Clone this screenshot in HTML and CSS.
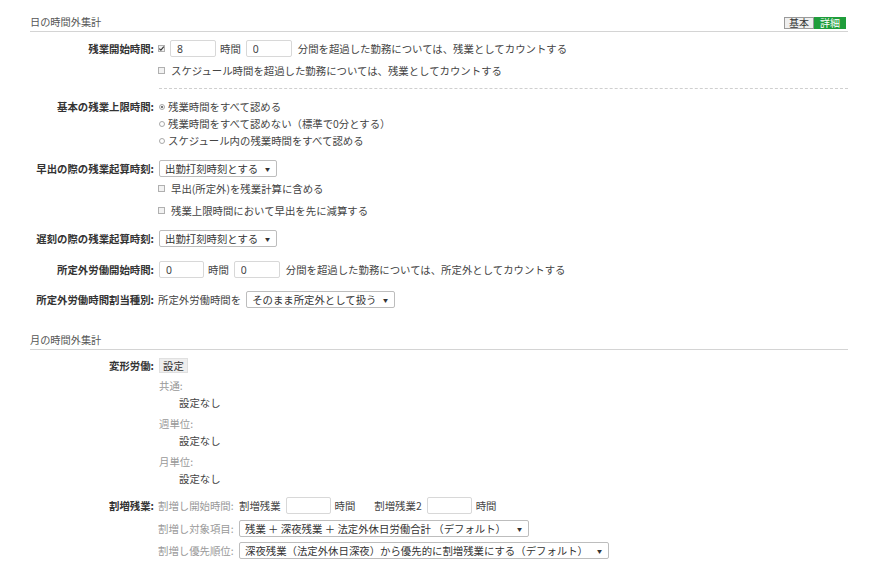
FILE: index.html
```html
<!DOCTYPE html>
<html lang="ja">
<head>
<meta charset="utf-8">
<title>時間外集計</title>
<link rel="stylesheet" href="styles.css">
</head>
<body>
<div class="page">
  <section class="sec">
    <div class="sec-head">
      <span class="sec-title">日の時間外集計</span>
      <span class="mode"><span class="mode-basic">基本</span><span class="mode-detail">詳細</span></span>
    </div>

    <div class="row r-start">
      <div class="label">残業開始時間:</div>
      <div class="content">
        <div class="line">
          <span class="cb checked"><svg viewBox="0 0 7 7" width="7" height="7"><path d="M1.3 3.6 L2.9 5.1 L5.8 1.6" fill="none" stroke="#333" stroke-width="1.1"/></svg></span>
          <input class="num n1" type="text" value="8">
          <span class="unit">時間</span>
          <input class="num n2" type="text" value="0">
          <span class="after">分間を超過した勤務については、残業としてカウントする</span>
        </div>
        <div class="line l-gap5">
          <span class="cb"></span>
          <span class="cb-text">スケジュール時間を超過した勤務については、残業としてカウントする</span>
        </div>
      </div>
    </div>

    <div class="dash"></div>

    <div class="row r-limit">
      <div class="label">基本の残業上限時間:</div>
      <div class="content">
        <div class="line"><span class="radio checked"></span><span class="radio-text">残業時間をすべて認める</span></div>
        <div class="line"><span class="radio"></span><span class="radio-text">残業時間をすべて認めない（標準で0分とする）</span></div>
        <div class="line"><span class="radio"></span><span class="radio-text">スケジュール内の残業時間をすべて認める</span></div>
      </div>
    </div>

    <div class="row r-early">
      <div class="label">早出の際の残業起算時刻:</div>
      <div class="content">
        <div class="line"><span class="select s-118"><span>出勤打刻時刻とする</span><span class="arrow">▼</span></span></div>
        <div class="line l-gap3"><span class="cb"></span><span class="cb-text">早出(所定外)を残業計算に含める</span></div>
        <div class="line l-gap5"><span class="cb"></span><span class="cb-text">残業上限時間において早出を先に減算する</span></div>
      </div>
    </div>

    <div class="row r-late">
      <div class="label">遅刻の際の残業起算時刻:</div>
      <div class="content">
        <div class="line"><span class="select s-118"><span>出勤打刻時刻とする</span><span class="arrow">▼</span></span></div>
      </div>
    </div>

    <div class="row r-extra">
      <div class="label">所定外労働開始時間:</div>
      <div class="content">
        <div class="line">
          <input class="num n3" type="text" value="0">
          <span class="unit">時間</span>
          <input class="num n2" type="text" value="0">
          <span class="after">分間を超過した勤務については、所定外としてカウントする</span>
        </div>
      </div>
    </div>

    <div class="row r-assign">
      <div class="label">所定外労働時間割当種別:</div>
      <div class="content">
        <div class="line">
          <span class="pre">所定外労働時間を</span>
          <span class="select s-149"><span>そのまま所定外として扱う</span><span class="arrow">▼</span></span>
        </div>
      </div>
    </div>
  </section>

  <section class="sec sec2">
    <div class="sec-head">
      <span class="sec-title">月の時間外集計</span>
    </div>

    <div class="row r-henkei">
      <div class="label">変形労働:</div>
      <div class="content">
        <div class="line"><span class="btn">設定</span></div>
        <div class="sub l-gap3">
          <div class="line sub-label">共通:</div>
          <div class="line sub-value">設定なし</div>
        </div>
        <div class="sub l-gap4">
          <div class="line sub-label">週単位:</div>
          <div class="line sub-value">設定なし</div>
        </div>
        <div class="sub l-gap4">
          <div class="line sub-label">月単位:</div>
          <div class="line sub-value">設定なし</div>
        </div>
      </div>
    </div>

    <div class="row r-premium">
      <div class="label">割増残業:</div>
      <div class="content">
        <div class="line">
          <span class="plabel">割増し開始時間:</span>
          <span class="ptext">割増残業</span>
          <input class="num n4" type="text" value="">
          <span class="unit">時間</span>
          <span class="ptext p2">割増残業2</span>
          <input class="num n4" type="text" value="">
          <span class="unit">時間</span>
        </div>
        <div class="line l-gap6">
          <span class="plabel">割増し対象項目:</span>
          <span class="select s-290"><span>残業 ＋ 深夜残業 ＋ 法定外休日労働合計 （デフォルト）</span><span class="arrow">▼</span></span>
        </div>
        <div class="line l-gap5">
          <span class="plabel">割増し優先順位:</span>
          <span class="select s-370"><span>深夜残業（法定外休日深夜）から優先的に割増残業にする（デフォルト）</span><span class="arrow">▼</span></span>
        </div>
      </div>
    </div>
  </section>
</div>
</body>
</html>
```

FILE: styles.css
```css
* { box-sizing: border-box; }

html, body {
  margin: 0;
  padding: 0;
  background: #ffffff;
}

body {
  font-family: "Noto Sans CJK JP", "Noto Sans", sans-serif;
  font-size: 10.4px;
  color: #444;
  line-height: 17px;
}

.page {
  padding: 13px 25px 0 30px;
}

.sec-head {
  display: flex;
  justify-content: space-between;
  align-items: center;
  height: 19px;
  border-bottom: 1px solid #d4d4d4;
  padding-bottom: 1px;
}

.sec-title {
  color: #555;
  font-size: 10.2px;
}

.mode {
  display: inline-flex;
  height: 12px;
  margin-top: 2px;
  margin-right: 2px;
  font-size: 10px;
  line-height: 10px;
}

.mode-basic {
  display: inline-flex;
  align-items: center;
  padding: 0 4px;
  background: #efefef;
  border: 1px solid #9a9a9a;
  color: #333;
}

.mode-detail {
  display: inline-flex;
  align-items: center;
  padding: 0 5px;
  background: #1f9d3b;
  border: 1px solid #1f9d3b;
  color: #ffffff;
}

.row {
  display: grid;
  grid-template-columns: 124px 1fr;
  column-gap: 4px;
}

.label {
  text-align: right;
  font-weight: bold;
  color: #333;
  height: 17px;
  line-height: 17px;
}

.content {
  display: flex;
  flex-direction: column;
}

.line {
  display: flex;
  align-items: center;
  height: 17px;
  white-space: nowrap;
}

.l-gap3 { margin-top: 3px; }
.l-gap4 { margin-top: 4px; }
.l-gap5 { margin-top: 5px; }
.l-gap6 { margin-top: 6px; }

.r-start { margin-top: 8px; }
.r-limit { margin-top: 9px; }
.r-early { margin-top: 11px; }
.r-late { margin-top: 11px; }
.r-extra { margin-top: 14px; }
.r-assign { margin-top: 13px; }
.sec2 { margin-top: 23px; }
.r-henkei { margin-top: 7px; }
.r-premium { margin-top: 10px; }

.dash {
  margin-top: 9px;
  margin-left: 129px;
  border-top: 1px dashed #cfcfcf;
  height: 0;
}

.cb {
  display: inline-flex;
  width: 7px;
  height: 7px;
  border: 1px solid #b0b0b0;
  background: #f2f2f2;
  margin-left: 0;
  flex: none;
}

.cb.checked {
  border: none;
  background: #f2f2f2;
  outline: 1px solid #b0b0b0;
  outline-offset: -1px;
}

.cb.checked svg {
  display: block;
}

.cb-text {
  margin-left: 6px;
}

.radio {
  display: inline-block;
  width: 6px;
  height: 6px;
  border: 1px solid #a8a8a8;
  border-radius: 50%;
  background: #fff;
  margin-left: 1px;
  position: relative;
  flex: none;
}

.radio.checked {
  background: radial-gradient(circle, #777 0 1.3px, #fff 1.6px);
}

.radio-text {
  margin-left: 3px;
}

.num {
  height: 17px;
  width: 46px;
  border: 1px solid #d8d8d8;
  border-radius: 2px;
  padding: 0 0 0 6px;
  font-family: "Noto Sans", sans-serif;
  font-size: 10.4px;
  color: #444;
  background: #fff;
  outline: none;
}

.n1 { margin-left: 5px; }
.n2 { margin-left: 5px; width: 46px; }
.n3 { margin-left: 1px; width: 45px; }
.n4 { width: 45px; margin-left: 5px; }

.unit {
  margin-left: 4px;
}

.after {
  margin-left: 6px;
}

.select {
  display: inline-flex;
  align-items: center;
  justify-content: space-between;
  height: 17px;
  border: 1px solid #bdbdbd;
  border-radius: 2px;
  padding: 0 6px 0 5px;
  background: #fff;
  color: #333;
  margin-left: 1px;
}

.arrow {
  font-size: 5px;
  line-height: 5px;
  color: #333;
}

.s-118 { width: 118px; }
.s-149 { width: 149px; }
.s-290 { width: 290px; }
.s-370 { width: 370px; }

.pre + .select { margin-left: 5px; }

.btn {
  display: inline-flex;
  align-items: center;
  height: 15px;
  padding: 0 3px;
  margin-left: 1px;
  background: #eeeeee;
  border: 1px solid #e0e0e0;
  color: #333;
}

.sub-label {
  color: #999;
  margin-left: 1px;
}

.sub-value {
  margin-left: 21px;
  color: #444;
}

.plabel {
  display: inline-block;
  width: 81px;
  color: #999;
  flex: none;
}

.plabel + .select { margin-left: 0; }

.ptext {
  color: #444;
}

.p2 {
  margin-left: 19px;
}
```
